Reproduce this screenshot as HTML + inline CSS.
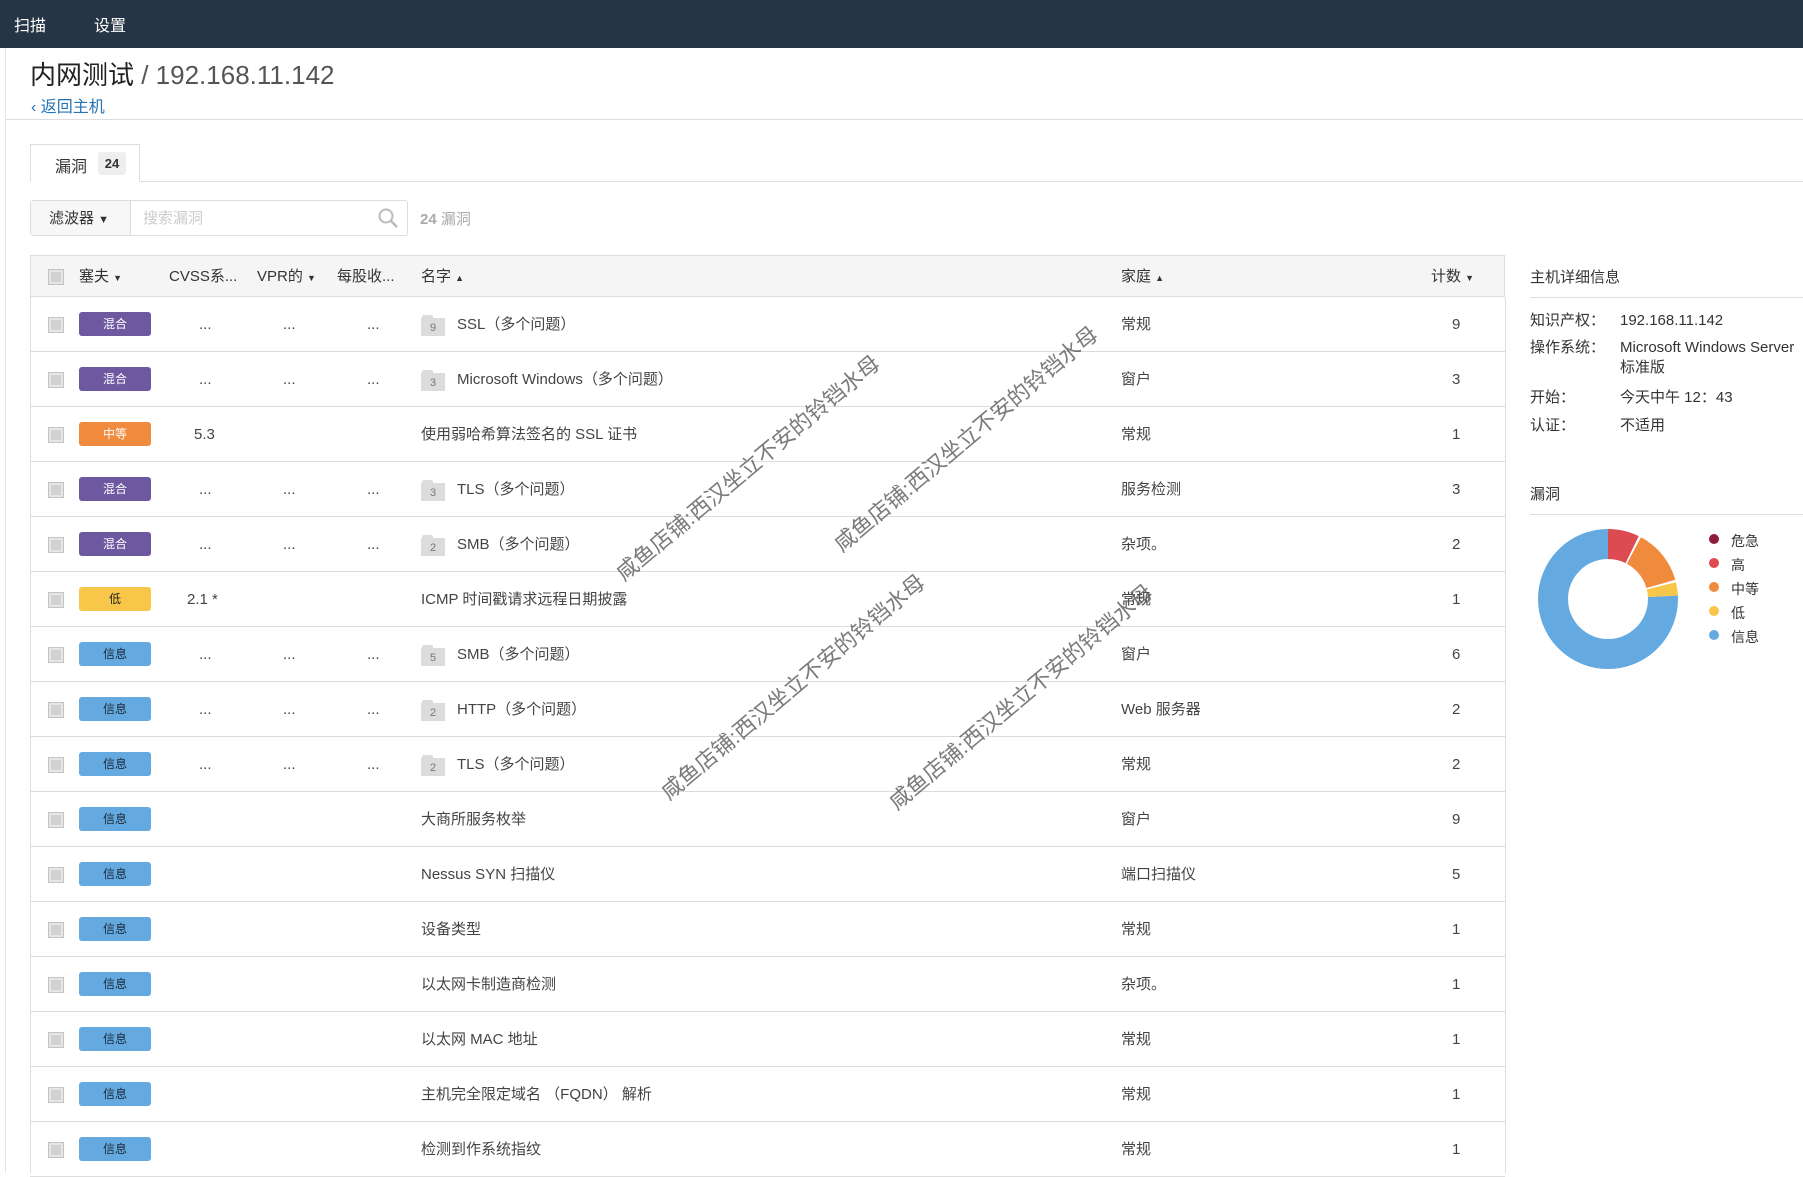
<!DOCTYPE html>
<html><head><meta charset="utf-8"><style>
*{margin:0;padding:0;box-sizing:border-box}
body{width:1803px;height:1173px;overflow:hidden;background:#fff;font-family:"Liberation Sans","Noto Sans CJK SC",sans-serif;color:#333;position:relative;font-size:15px}
.a{position:absolute;white-space:nowrap}
.nav{position:absolute;left:0;top:0;width:1803px;height:48px;background:#263545}
.nav span{position:absolute;top:12px;color:#fff;font-size:16px}
.row{position:absolute;left:30px;width:1475px;height:55px;border-bottom:1px solid #dcdcdc}
.row>*{margin-left:-3px}
.cb{position:absolute;left:22px;top:21px;width:14px;height:14px;background:#d2d2d2;border:2px solid #e6e6e6;box-shadow:0 0 0 1px #c4c4c4}
.bd{position:absolute;left:52px;top:15px;width:72px;height:24px;border-radius:3px;font-size:12px;text-align:center;line-height:24px}
.mix{background:#6e59a0;color:#fff}.med{background:#f08a3c;color:#fff}.low{background:#f8c74a;color:#222}.inf{background:#64a9e0;color:#1b2a3a}
.c{position:absolute;top:17px;font-size:15px;line-height:21px;height:21px;color:#444}
.fo{position:absolute;left:394px;top:17px;width:24px;height:22px}
.fo i{position:absolute;left:0;top:4px;width:24px;height:18px;background:#dcdcdc;font-style:normal;font-size:11px;color:#777;text-align:center;line-height:20px}
.fo b{position:absolute;left:1px;top:1px;width:11px;height:4px;background:#dcdcdc;border-radius:2px 2px 0 0}
.wm{position:absolute;font-size:22px;color:rgba(90,90,90,.8);transform:translate(-50%,-50%) rotate(-40deg);white-space:nowrap}
.lb{position:absolute;left:1530px;font-size:15px;line-height:21px}
.vl{position:absolute;left:1620px;font-size:15px;line-height:21px;white-space:nowrap}
</style></head><body>
<div class="nav"><span style="left:14px">扫描</span><span style="left:94px">设置</span></div>
<div class="a" style="left:5px;top:48px;width:1px;height:1125px;background:#e6e6e6"></div>
<div class="a" style="left:30px;top:55px;font-size:26px;color:#222">内网测试 <span style="color:#555">/ 192.168.11.142</span></div>
<div class="a" style="left:31px;top:93px;font-size:16px;color:#2473b5">‹ 返回主机</div>
<div class="a" style="left:6px;top:119px;width:1797px;height:1px;background:#ddd"></div>
<div class="a" style="left:30px;top:181px;width:1773px;height:1px;background:#ddd"></div>
<div class="a" style="left:30px;top:144px;width:110px;height:38px;border:1px solid #ddd;border-bottom:1px solid #fff;background:#fff"></div>
<div class="a" style="left:55px;top:153px;font-size:16px">漏洞</div>
<div class="a" style="left:98px;top:152px;width:28px;height:23px;background:#eee;border-radius:3px;font-size:13px;font-weight:bold;text-align:center;line-height:23px">24</div>
<div class="a" style="left:30px;top:200px;width:378px;height:36px;border:1px solid #ddd;border-radius:3px;background:#fff"></div>
<div class="a" style="left:31px;top:201px;width:100px;height:34px;border-right:1px solid #ddd;background:#f7f7f7"></div>
<div class="a" style="left:49px;top:207px;font-size:15px">滤波器 <span style="font-size:11px">▼</span></div>
<div class="a" style="left:143px;top:207px;font-size:15px;color:#ccc">搜索漏洞</div>
<svg class="a" style="left:377px;top:207px" width="22" height="22"><circle cx="9" cy="9" r="6.5" fill="none" stroke="#bbb" stroke-width="2"/><line x1="14" y1="14" x2="20" y2="20" stroke="#bbb" stroke-width="2.5"/></svg>
<div class="a" style="left:420px;top:208px;font-size:15px;color:#aaa;font-weight:bold">24 <span style="font-weight:normal">漏洞</span></div>
<div class="a" style="left:30px;top:255px;width:1475px;height:42px;background:#f5f5f5;border:1px solid #ddd"></div>
<div class="a" style="left:49px;top:270px;width:14px;height:14px;background:#d2d2d2;border:2px solid #e6e6e6;box-shadow:0 0 0 1px #c4c4c4"></div>
<div class="a" style="left:79px;top:265px;font-size:15px">塞夫 <span style="font-size:9px">▼</span></div>
<div class="a" style="left:169px;top:265px;font-size:15px">CVSS系...</div>
<div class="a" style="left:257px;top:265px;font-size:15px">VPR的 <span style="font-size:9px">▼</span></div>
<div class="a" style="left:337px;top:265px;font-size:15px">每股收...</div>
<div class="a" style="left:421px;top:265px;font-size:15px">名字 <span style="font-size:9px">▲</span></div>
<div class="a" style="left:1121px;top:265px;font-size:15px">家庭 <span style="font-size:9px">▲</span></div>
<div class="a" style="left:1431px;top:265px;font-size:15px">计数 <span style="font-size:9px">▼</span></div>
<div class="a" style="left:30px;top:297px;width:1px;height:876px;background:#ddd"></div>
<div class="a" style="left:1505px;top:297px;width:1px;height:876px;background:#ddd"></div>

<div class="row" style="top:297px"><div class="cb"></div><div class="bd mix">混合</div><div class="c" style="left:172px">...</div><div class="c" style="left:256px">...</div><div class="c" style="left:340px">...</div><div class="fo"><b></b><i>9</i></div><div class="c" style="left:430px">SSL（多个问题）</div><div class="c" style="left:1094px">常规</div><div class="c" style="left:1425px">9</div></div>
<div class="row" style="top:352px"><div class="cb"></div><div class="bd mix">混合</div><div class="c" style="left:172px">...</div><div class="c" style="left:256px">...</div><div class="c" style="left:340px">...</div><div class="fo"><b></b><i>3</i></div><div class="c" style="left:430px">Microsoft Windows（多个问题）</div><div class="c" style="left:1094px">窗户</div><div class="c" style="left:1425px">3</div></div>
<div class="row" style="top:407px"><div class="cb"></div><div class="bd med">中等</div><div class="c" style="left:167px">5.3</div><div class="c" style="left:394px">使用弱哈希算法签名的 SSL 证书</div><div class="c" style="left:1094px">常规</div><div class="c" style="left:1425px">1</div></div>
<div class="row" style="top:462px"><div class="cb"></div><div class="bd mix">混合</div><div class="c" style="left:172px">...</div><div class="c" style="left:256px">...</div><div class="c" style="left:340px">...</div><div class="fo"><b></b><i>3</i></div><div class="c" style="left:430px">TLS（多个问题）</div><div class="c" style="left:1094px">服务检测</div><div class="c" style="left:1425px">3</div></div>
<div class="row" style="top:517px"><div class="cb"></div><div class="bd mix">混合</div><div class="c" style="left:172px">...</div><div class="c" style="left:256px">...</div><div class="c" style="left:340px">...</div><div class="fo"><b></b><i>2</i></div><div class="c" style="left:430px">SMB（多个问题）</div><div class="c" style="left:1094px">杂项。</div><div class="c" style="left:1425px">2</div></div>
<div class="row" style="top:572px"><div class="cb"></div><div class="bd low">低</div><div class="c" style="left:160px">2.1 *</div><div class="c" style="left:394px">ICMP 时间戳请求远程日期披露</div><div class="c" style="left:1094px">常规</div><div class="c" style="left:1425px">1</div></div>
<div class="row" style="top:627px"><div class="cb"></div><div class="bd inf">信息</div><div class="c" style="left:172px">...</div><div class="c" style="left:256px">...</div><div class="c" style="left:340px">...</div><div class="fo"><b></b><i>5</i></div><div class="c" style="left:430px">SMB（多个问题）</div><div class="c" style="left:1094px">窗户</div><div class="c" style="left:1425px">6</div></div>
<div class="row" style="top:682px"><div class="cb"></div><div class="bd inf">信息</div><div class="c" style="left:172px">...</div><div class="c" style="left:256px">...</div><div class="c" style="left:340px">...</div><div class="fo"><b></b><i>2</i></div><div class="c" style="left:430px">HTTP（多个问题）</div><div class="c" style="left:1094px">Web 服务器</div><div class="c" style="left:1425px">2</div></div>
<div class="row" style="top:737px"><div class="cb"></div><div class="bd inf">信息</div><div class="c" style="left:172px">...</div><div class="c" style="left:256px">...</div><div class="c" style="left:340px">...</div><div class="fo"><b></b><i>2</i></div><div class="c" style="left:430px">TLS（多个问题）</div><div class="c" style="left:1094px">常规</div><div class="c" style="left:1425px">2</div></div>
<div class="row" style="top:792px"><div class="cb"></div><div class="bd inf">信息</div><div class="c" style="left:394px">大商所服务枚举</div><div class="c" style="left:1094px">窗户</div><div class="c" style="left:1425px">9</div></div>
<div class="row" style="top:847px"><div class="cb"></div><div class="bd inf">信息</div><div class="c" style="left:394px">Nessus SYN 扫描仪</div><div class="c" style="left:1094px">端口扫描仪</div><div class="c" style="left:1425px">5</div></div>
<div class="row" style="top:902px"><div class="cb"></div><div class="bd inf">信息</div><div class="c" style="left:394px">设备类型</div><div class="c" style="left:1094px">常规</div><div class="c" style="left:1425px">1</div></div>
<div class="row" style="top:957px"><div class="cb"></div><div class="bd inf">信息</div><div class="c" style="left:394px">以太网卡制造商检测</div><div class="c" style="left:1094px">杂项。</div><div class="c" style="left:1425px">1</div></div>
<div class="row" style="top:1012px"><div class="cb"></div><div class="bd inf">信息</div><div class="c" style="left:394px">以太网 MAC 地址</div><div class="c" style="left:1094px">常规</div><div class="c" style="left:1425px">1</div></div>
<div class="row" style="top:1067px"><div class="cb"></div><div class="bd inf">信息</div><div class="c" style="left:394px">主机完全限定域名 （FQDN） 解析</div><div class="c" style="left:1094px">常规</div><div class="c" style="left:1425px">1</div></div>
<div class="row" style="top:1122px"><div class="cb"></div><div class="bd inf">信息</div><div class="c" style="left:394px">检测到作系统指纹</div><div class="c" style="left:1094px">常规</div><div class="c" style="left:1425px">1</div></div>

<div class="a" style="left:1530px;top:266px;font-size:15px">主机详细信息</div>
<div class="a" style="left:1530px;top:297px;width:273px;height:1px;background:#ddd"></div>
<div class="lb" style="top:310px">知识产权：</div><div class="vl" style="top:310px">192.168.11.142</div>
<div class="lb" style="top:337px">操作系统：</div><div class="vl" style="top:337px">Microsoft Windows Server</div>
<div class="vl" style="top:357px">标准版</div>
<div class="lb" style="top:387px">开始：</div><div class="vl" style="top:387px">今天中午 12：43</div>
<div class="lb" style="top:415px">认证：</div><div class="vl" style="top:415px">不适用</div>
<div class="a" style="left:1530px;top:483px;font-size:15px">漏洞</div>
<div class="a" style="left:1530px;top:514px;width:273px;height:1px;background:#ddd"></div>
<svg class="a" style="left:1530px;top:520px" width="160" height="160" viewBox="0 0 160 160">
<g transform="rotate(-90 78 79)" fill="none" stroke-width="30">
<circle cx="78" cy="79" r="55" stroke="#64a9e0" stroke-dasharray="262 400" stroke-dashoffset="-83.5"/>
<circle cx="78" cy="79" r="55" stroke="#dc4a52" stroke-dasharray="25 400" stroke-dashoffset="0"/>
<circle cx="78" cy="79" r="55" stroke="#f08a3c" stroke-dasharray="44 400" stroke-dashoffset="-27"/>
<circle cx="78" cy="79" r="55" stroke="#f8c74a" stroke-dasharray="10.5 400" stroke-dashoffset="-73"/>
</g></svg>
<svg class="a" style="left:1708px;top:530px" width="14" height="110"><circle cx="6" cy="9" r="5" fill="#8e1c3c"/><circle cx="6" cy="33" r="5" fill="#dc4a52"/><circle cx="6" cy="57" r="5" fill="#f08a3c"/><circle cx="6" cy="81" r="5" fill="#f8c74a"/><circle cx="6" cy="105" r="5" fill="#64a9e0"/></svg>
<div class="a" style="left:1731px;top:529px;font-size:14px;line-height:24px">危急<br>高<br>中等<br>低<br>信息</div>

<div class="wm" style="left:747px;top:467px">咸鱼店铺:西汉坐立不安的铃铛水母</div>
<div class="wm" style="left:965px;top:438px">咸鱼店铺:西汉坐立不安的铃铛水母</div>
<div class="wm" style="left:792px;top:686px">咸鱼店铺:西汉坐立不安的铃铛水母</div>
<div class="wm" style="left:1020px;top:696px">咸鱼店铺:西汉坐立不安的铃铛水母</div>
</body></html>
